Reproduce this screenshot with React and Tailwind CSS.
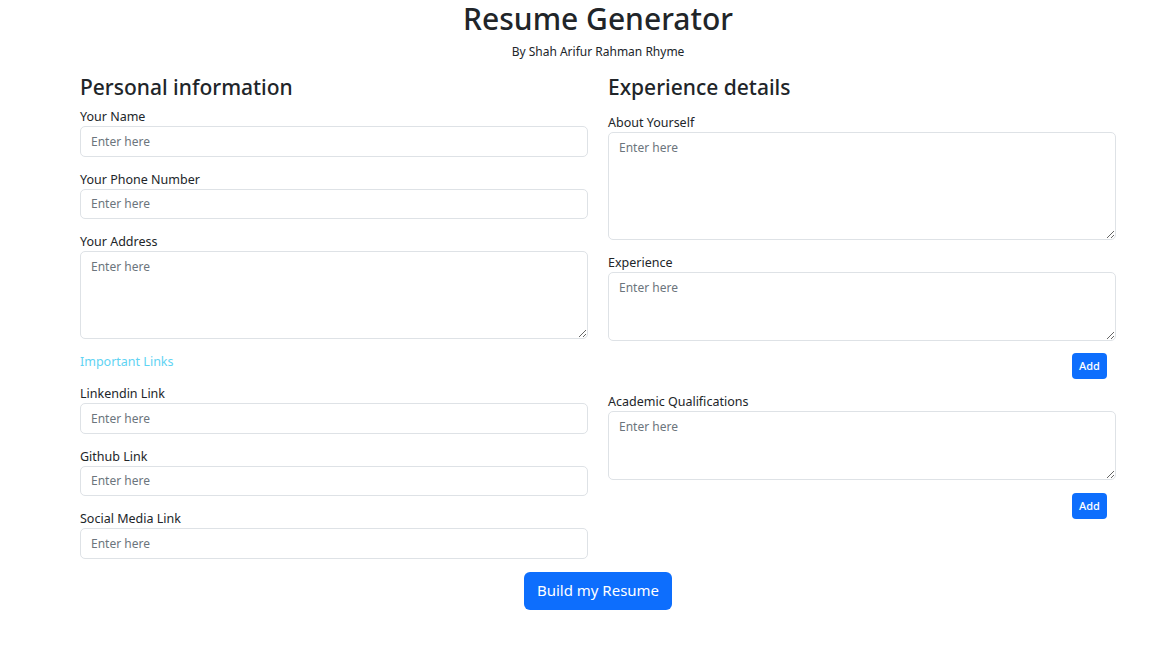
import React from "react";

const inputCls =
  "block w-full h-[30.5px] rounded-[5px] border border-[#dee2e6] bg-white px-[10px] text-[12px] text-[#212529] placeholder:text-[#6c757d] outline-none";
const areaCls =
  "block w-full rounded-[5px] border border-[#dee2e6] bg-white px-[10px] py-[6px] text-[12px] leading-[18px] text-[#212529] placeholder:text-[#6c757d] outline-none";

function Field({ label, area, h, last }) {
  return (
    <div className={last ? "" : "mb-[14px]"}>
      <label className="block text-[12.5px] leading-[18px] text-[#212529]">{label}</label>
      {area ? (
        <textarea placeholder="Enter here" className={areaCls} style={{ height: h }} />
      ) : (
        <input type="text" placeholder="Enter here" className={inputCls} />
      )}
    </div>
  );
}

function AddButton() {
  return (
    <div className="flex justify-end pr-[9px] mb-[14px]">
      <button className="h-[26px] w-[35px] rounded-[4px] bg-[#0d6efd] text-[11px] font-medium text-white">
        Add
      </button>
    </div>
  );
}

export default function App() {
  return (
    <div className="min-h-screen bg-white font-['Noto_Sans',sans-serif] text-[#212529]">
      <div className="ml-[80px] w-[1036px]">
        {/* Header */}
        <div className="text-center">
          <h1 className="text-[30px] font-medium leading-[38px]">Resume Generator</h1>
          <p className="mt-[6px] text-[12px] leading-[16px]">By Shah Arifur Rahman Rhyme</p>
        </div>

        <div className="mt-[13px] grid grid-cols-2 gap-x-[20px]">
          {/* Personal info */}
          <div>
            <h4 className="text-[21px] font-medium leading-[29px] mb-[6px]">Personal information</h4>
            <Field label="Your Name" />
            <Field label="Your Phone Number" />
            <Field label="Your Address" area h={88} />
            <p className="mb-[14px] text-[12.5px] leading-[18px] text-[#5fd3f3]">Important Links</p>
            <Field label="Linkendin Link" />
            <Field label="Github Link" />
            <Field label="Social Media Link" last />
          </div>

          {/* Experience */}
          <div>
            <h4 className="text-[21px] font-medium leading-[29px] mb-[12px]">Experience details</h4>
            <Field label="About Yourself" area h={108} />
            <Field label="Experience" area h={69} last />
            <div className="mt-[12px]">
              <AddButton />
            </div>
            <Field label="Academic Qualifications" area h={69} last />
            <div className="mt-[13px]">
              <AddButton />
            </div>
          </div>
        </div>

        <div className="mt-[13px] flex justify-center">
          <button className="h-[38px] w-[148px] rounded-[6px] bg-[#0d6efd] text-[15px] text-white">
            Build my Resume
          </button>
        </div>
      </div>
    </div>
  );
}
